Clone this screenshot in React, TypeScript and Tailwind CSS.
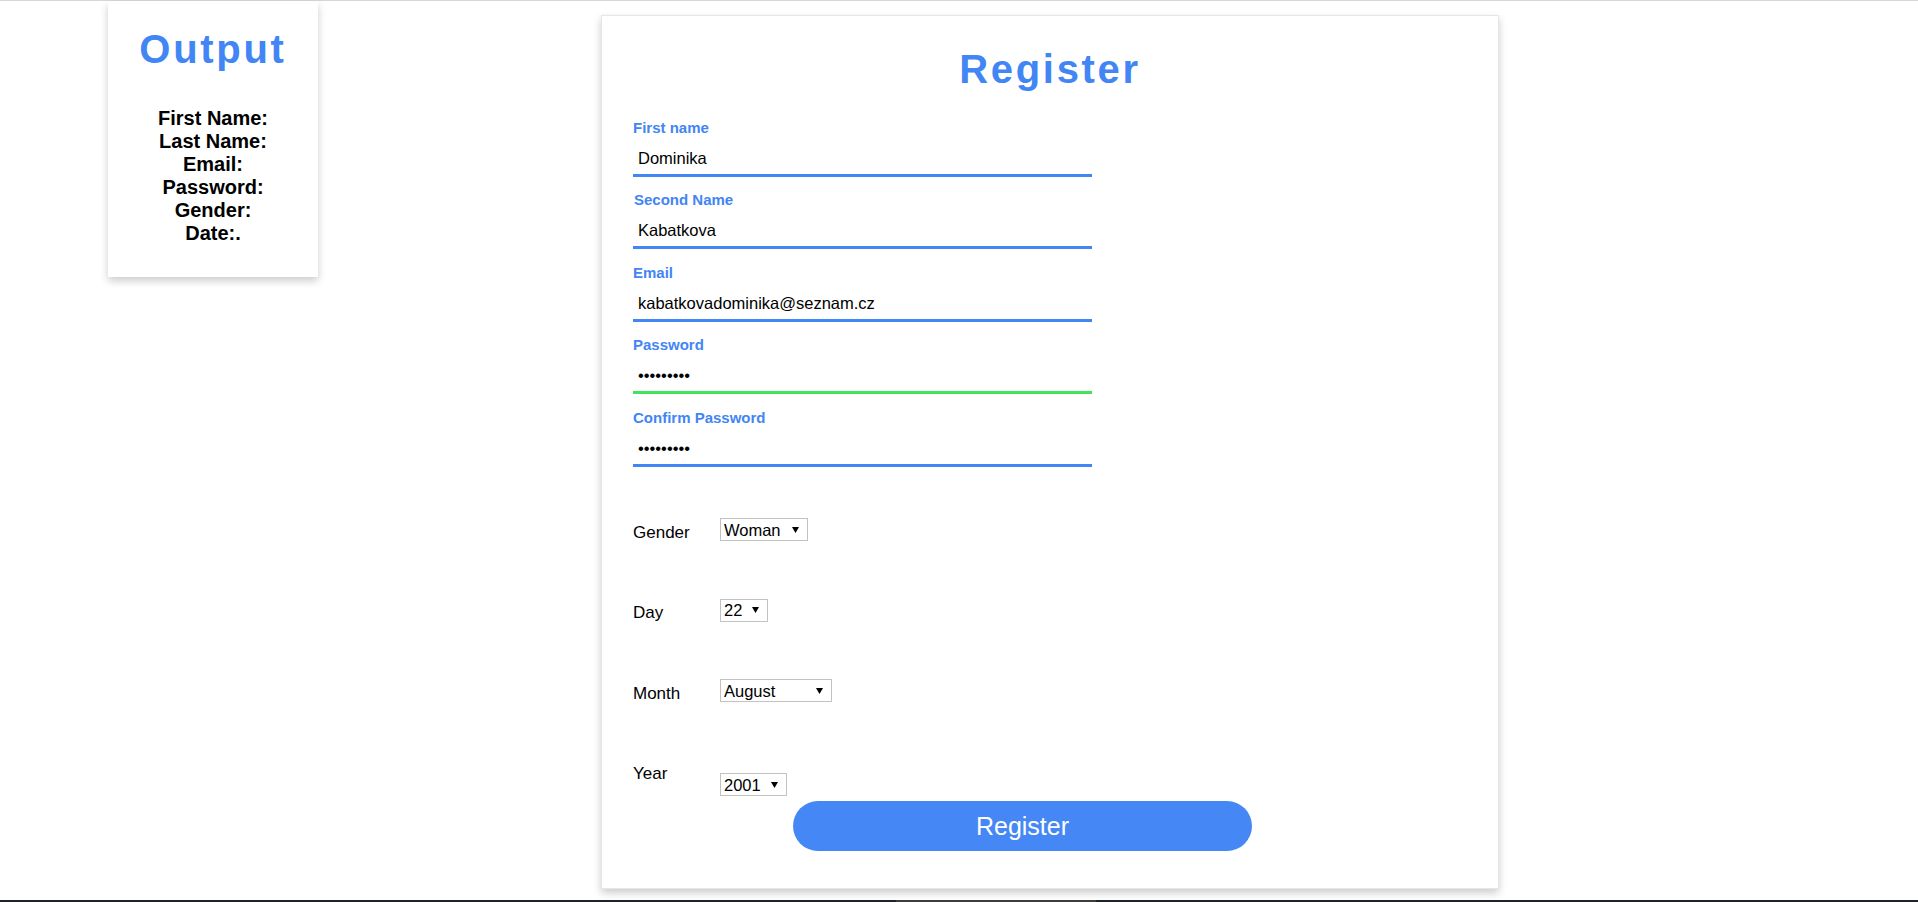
import React from "react";

const BLUE = "text-[#4285f4]";

function Arrow() {
  return (
    <svg width="7" height="6" viewBox="0 0 7 6" className="shrink-0">
      <polygon points="0,0 7,0 3.5,6" fill="#000" />
    </svg>
  );
}

function FakeSelect({ value, width }: { value: string; width: string }) {
  return (
    <div
      className={`${width} h-[23px] flex items-center justify-between border border-[#c2c2c2] bg-white pl-[3px] pr-[8px] text-[16.5px] leading-[18px] text-black`}
    >
      <span>{value}</span>
      <Arrow />
    </div>
  );
}

function Field({
  label,
  value,
  type = "text",
  green = false,
  shift = false,
}: {
  label: string;
  value: string;
  type?: string;
  green?: boolean;
  shift?: boolean;
}) {
  return (
    <div className="flex flex-col">
      <label className={`text-[15px] leading-[17px] font-bold ${BLUE} ${shift ? "ml-[1px]" : ""}`}>{label}</label>
      <input
        type={type}
        defaultValue={value}
        readOnly
        className={`w-[459px] h-[41px] pt-[13.5px] pb-[6.5px] pl-[5px] border-b-[3px] ${
          green ? "border-[#41e35d]" : "border-[#4285f4]"
        } text-[16.5px] leading-[18px] text-black bg-transparent outline-none`}
      />
    </div>
  );
}

export default function App() {
  return (
    <div
      className="min-h-screen flex flex-col bg-white border-t border-[#d7d7db]"
      style={{ fontFamily: '"Liberation Sans", Arial, sans-serif' }}
    >
      <div className="flex items-start pl-[108px] gap-[283px]">
        {/* Output card */}
        <div className="w-[210px] pt-[25px] pb-[32.5px] bg-white text-center shadow-[0_4px_8px_0_rgba(0,0,0,0.2)]">
          <h2 className={`text-[40px] leading-[46px] font-bold tracking-[2.7px] ${BLUE}`}>Output</h2>
          <div className="mt-[34.5px] text-[20px] leading-[23px] font-bold text-black">
            <div>First Name:</div>
            <div>Last Name:</div>
            <div>Email:</div>
            <div>Password:</div>
            <div>Gender:</div>
            <div>Date:.</div>
          </div>
        </div>

        {/* Register card */}
        <div className="w-[898px] mt-[14px] pt-[30px] pb-[37px] bg-white border border-[#e6e6e6] shadow-[0_4px_8px_0_rgba(0,0,0,0.2)]">
          <h1 className={`text-center text-[40px] leading-[46px] font-bold tracking-[2.7px] ${BLUE}`}>Register</h1>
          <form className="px-[31px] mt-[26.5px]" onSubmit={(e) => e.preventDefault()}>
            <div className="flex flex-col gap-[14.5px]">
              <Field label="First name" value="Dominika" />
              <Field label="Second Name" value="Kabatkova" shift />
              <Field label="Email" value="kabatkovadominika@seznam.cz" />
              <Field label="Password" value="123456789" type="password" green />
              <Field label="Confirm Password" value="123456789" type="password" />
            </div>

            <div className="mt-[51.5px] flex flex-col text-[17px] leading-[20px] text-black">
              <div className="h-[80.5px] flex items-start">
                <span className="w-[87px] mt-[4.6px]">Gender</span>
                <FakeSelect value="Woman" width="w-[88px]" />
              </div>
              <div className="h-[80.5px] flex items-start">
                <span className="w-[87px] mt-[4.6px]">Day</span>
                <FakeSelect value="22" width="w-[48px]" />
              </div>
              <div className="h-[80.5px] flex items-start">
                <span className="w-[87px] mt-[4.6px]">Month</span>
                <FakeSelect value="August" width="w-[112px]" />
              </div>
              <div className="flex items-start">
                <span className="w-[87px] mt-[4.6px]">Year</span>
                <div className="mt-[13.8px]">
                  <FakeSelect value="2001" width="w-[67px]" />
                </div>
              </div>
            </div>

            <button
              type="submit"
              className="block mt-[4.7px] ml-[160px] w-[459px] h-[50px] rounded-full bg-[#4487f5] text-white text-[25px] leading-[50px]"
            >
              Register
            </button>
          </form>
        </div>
      </div>

      <div className="mt-auto h-[2px] flex">
        <div className="w-[896px] bg-[#1f2327]" />
        <div className="w-[200px] bg-[#3c3c3c]" />
        <div className="flex-1 bg-[#1f2327]" />
      </div>
    </div>
  );
}
